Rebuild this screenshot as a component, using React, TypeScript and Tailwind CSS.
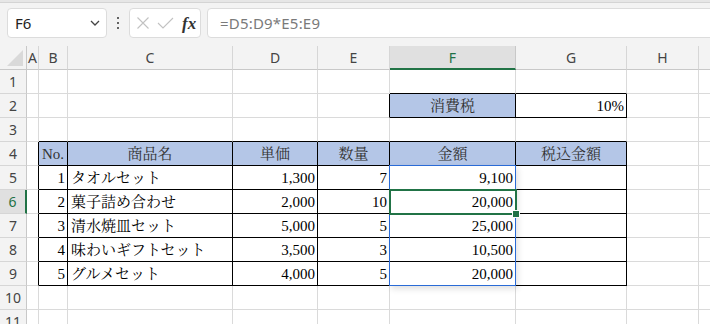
import { ReactNode } from "react";

const COLS = [
  { key: "A", w: 12 },
  { key: "B", w: 29 },
  { key: "C", w: 165 },
  { key: "D", w: 85 },
  { key: "E", w: 72 },
  { key: "F", w: 126 },
  { key: "G", w: 111 },
  { key: "H", w: 72 },
  { key: "I", w: 60 },
];

const serif = "font-['Liberation_Serif','Noto_Serif_CJK_JP','Noto_Sans_CJK_JP',serif]";

type Cell = { text: string; align?: "l" | "r" | "c"; fill?: boolean };

const items = [
  ["1", "タオルセット", "1,300", "7", "9,100"],
  ["2", "菓子詰め合わせ", "2,000", "10", "20,000"],
  ["3", "清水焼皿セット", "5,000", "5", "25,000"],
  ["4", "味わいギフトセット", "3,500", "3", "10,500"],
  ["5", "グルメセット", "4,000", "5", "20,000"],
];

// cell content per row / column
function getCell(row: number, col: string): Cell | null {
  if (row === 2 && col === "F") return { text: "消費税", align: "c", fill: true };
  if (row === 2 && col === "G") return { text: "10%", align: "r" };
  if (row === 4) {
    const h: Record<string, string> = { B: "No.", C: "商品名", D: "単価", E: "数量", F: "金額", G: "税込金額" };
    if (h[col]) return { text: h[col], align: "c", fill: true };
  }
  if (row >= 5 && row <= 9) {
    const it = items[row - 5];
    const m: Record<string, Cell> = {
      B: { text: it[0], align: "r" },
      C: { text: it[1], align: "l" },
      D: { text: it[2], align: "r" },
      E: { text: it[3], align: "r" },
      F: { text: it[4], align: "r" },
      G: { text: "", align: "r" },
    };
    if (m[col]) return m[col];
  }
  return null;
}

// which cells are inside the black bordered ranges
function inBox(row: number, col: string) {
  if (row === 2 && (col === "F" || col === "G")) return true;
  if (row >= 4 && row <= 9 && "BCDEFG".includes(col)) return true;
  return false;
}

const colIdx = (c: string) => COLS.findIndex((x) => x.key === c);
const nextCol = (c: string) => COLS[colIdx(c) + 1]?.key ?? "";

function GridCell({ row, col, w }: { row: number; col: string; w: number }) {
  const c = getCell(row, col);
  const rightBlack = inBox(row, col) || inBox(row, nextCol(col));
  const bottomBlack = inBox(row, col) || inBox(row + 1, col);
  const align =
    c?.align === "r" ? "justify-end pr-[2px]" : c?.align === "c" ? "justify-center" : "justify-start pl-[3px]";
  return (
    <div
      style={{ width: w }}
      className={`h-[24px] shrink-0 flex items-center border-r border-b ${
        rightBlack ? "border-r-black" : "border-r-[#dadada]"
      } ${bottomBlack ? "border-b-black" : "border-b-[#dadada]"} ${c?.fill ? "bg-[#b4c6e7] text-[#333]" : "bg-white text-black"} ${align} ${serif} text-[15px] whitespace-nowrap overflow-visible pt-[1px]`}
    >
      {c?.text}
    </div>
  );
}

function IconBox({ children }: { children: ReactNode }) {
  return <div className="flex items-center justify-center">{children}</div>;
}

export default function App() {
  const rows = Array.from({ length: 11 }, (_, i) => i + 1);
  return (
    <div className="w-[710px] h-[324px] overflow-hidden bg-[#f3f3f3] font-['Segoe_UI','Noto_Sans',sans-serif]">
      {/* top strip */}
      <div className="h-[3px] bg-[#e6e6e6] border-b border-[#d4d4d4]" />

      {/* formula bar */}
      <div className="flex items-center h-[30px] mt-[5px] pl-[7px]">
        <div className="w-[100px] h-[30px] shrink-0 rounded-[4px] border border-[#dcdcdc] bg-white flex items-center justify-between pl-[7px] pr-[6px]">
          <span className="text-[15px] text-[#222]">F6</span>
          <svg width="10" height="6" viewBox="0 0 10 6" fill="none">
            <path d="M1 1l4 4 4-4" stroke="#444" strokeWidth="1.3" />
          </svg>
        </div>
        <div className="w-[22px] shrink-0 flex flex-col items-center gap-[2.5px]">
          <span className="w-[2.5px] h-[2.5px] bg-[#333] rounded-full" />
          <span className="w-[2.5px] h-[2.5px] bg-[#333] rounded-full" />
          <span className="w-[2.5px] h-[2.5px] bg-[#333] rounded-full" />
        </div>
        <div className="w-[72px] h-[30px] shrink-0 rounded-[4px] border border-[#dcdcdc] bg-white flex items-center pl-[6px] gap-[7px]">
          <IconBox>
            <svg width="14" height="14" viewBox="0 0 14 14">
              <path d="M1.5 1.5l11 11M12.5 1.5l-11 11" stroke="#c2c2c2" strokeWidth="1.1" />
            </svg>
          </IconBox>
          <IconBox>
            <svg width="17" height="14" viewBox="0 0 17 14">
              <path d="M1 7l5 5L16 2" stroke="#c2c2c2" strokeWidth="1.1" fill="none" />
            </svg>
          </IconBox>
          <span className="font-['Liberation_Serif',serif] italic font-semibold text-[17px] text-[#333] leading-none ml-[1px]">
            fx
          </span>
        </div>
        <div className="w-[540px] h-[30px] shrink-0 ml-[6px] rounded-[4px] border border-[#dcdcdc] bg-white flex items-center pl-[12px]">
          <span className="text-[15px] text-[#7a7a7a] tracking-[0.2px]">=D5:D9*E5:E9</span>
        </div>
      </div>

      {/* sheet */}
      <div className="relative mt-[8px]">
        {/* column headers */}
        <div className="flex h-[24px]">
          <div className="w-[27px] shrink-0 border-r border-b border-[#c8c8c8] relative flex items-end justify-end pr-[3px] pb-[3px]">
            <div className="w-0 h-0 border-l-[16px] border-l-transparent border-b-[16px] border-b-[#d9d9d9]" />
          </div>
          {COLS.map((c) => (
            <div
              key={c.key}
              style={{ width: c.w }}
              className={`shrink-0 flex items-center justify-center text-[14px] border-r ${
                c.key === "F"
                  ? "bg-[#e0e0e0] text-[#1e7145] border-b-2 border-b-[#217346] border-r-[#c8c8c8]"
                  : "text-[#444] border-b border-[#c8c8c8] border-r-[#d6d6d6]"
              }`}
            >
              {c.key === "I" ? "" : c.key}
            </div>
          ))}
        </div>

        {/* rows */}
        {rows.map((r) => (
          <div key={r} className="flex">
            <div
              className={`w-[27px] h-[24px] shrink-0 flex items-center justify-center text-[14px] border-b border-b-[#d6d6d6] ${
                r === 6
                  ? "bg-[#e0e0e0] text-[#1e7145] border-r-2 border-r-[#217346]"
                  : "text-[#444] border-r border-r-[#c8c8c8]"
              }`}
            >
              {r}
            </div>
            {COLS.map((c) => (
              <GridCell key={c.key} row={r} col={c.key} w={c.w} />
            ))}
          </div>
        ))}

        {/* selected range F5:F9 */}
        <div className="absolute left-[389px] top-[119px] w-[127px] h-[121px] border border-[#2a6bd6] shadow-[2px_3px_6px_rgba(0,0,0,0.12)] pointer-events-none" />
        {/* active cell F6 */}
        <div className="absolute left-[389px] top-[143px] w-[128px] h-[26px] border-2 border-[#217346] pointer-events-none" />
        <div className="absolute left-[513px] top-[165px] w-[6px] h-[6px] bg-[#217346] border border-white box-content -translate-x-[1px] -translate-y-[1px]" />
      </div>
    </div>
  );
}
